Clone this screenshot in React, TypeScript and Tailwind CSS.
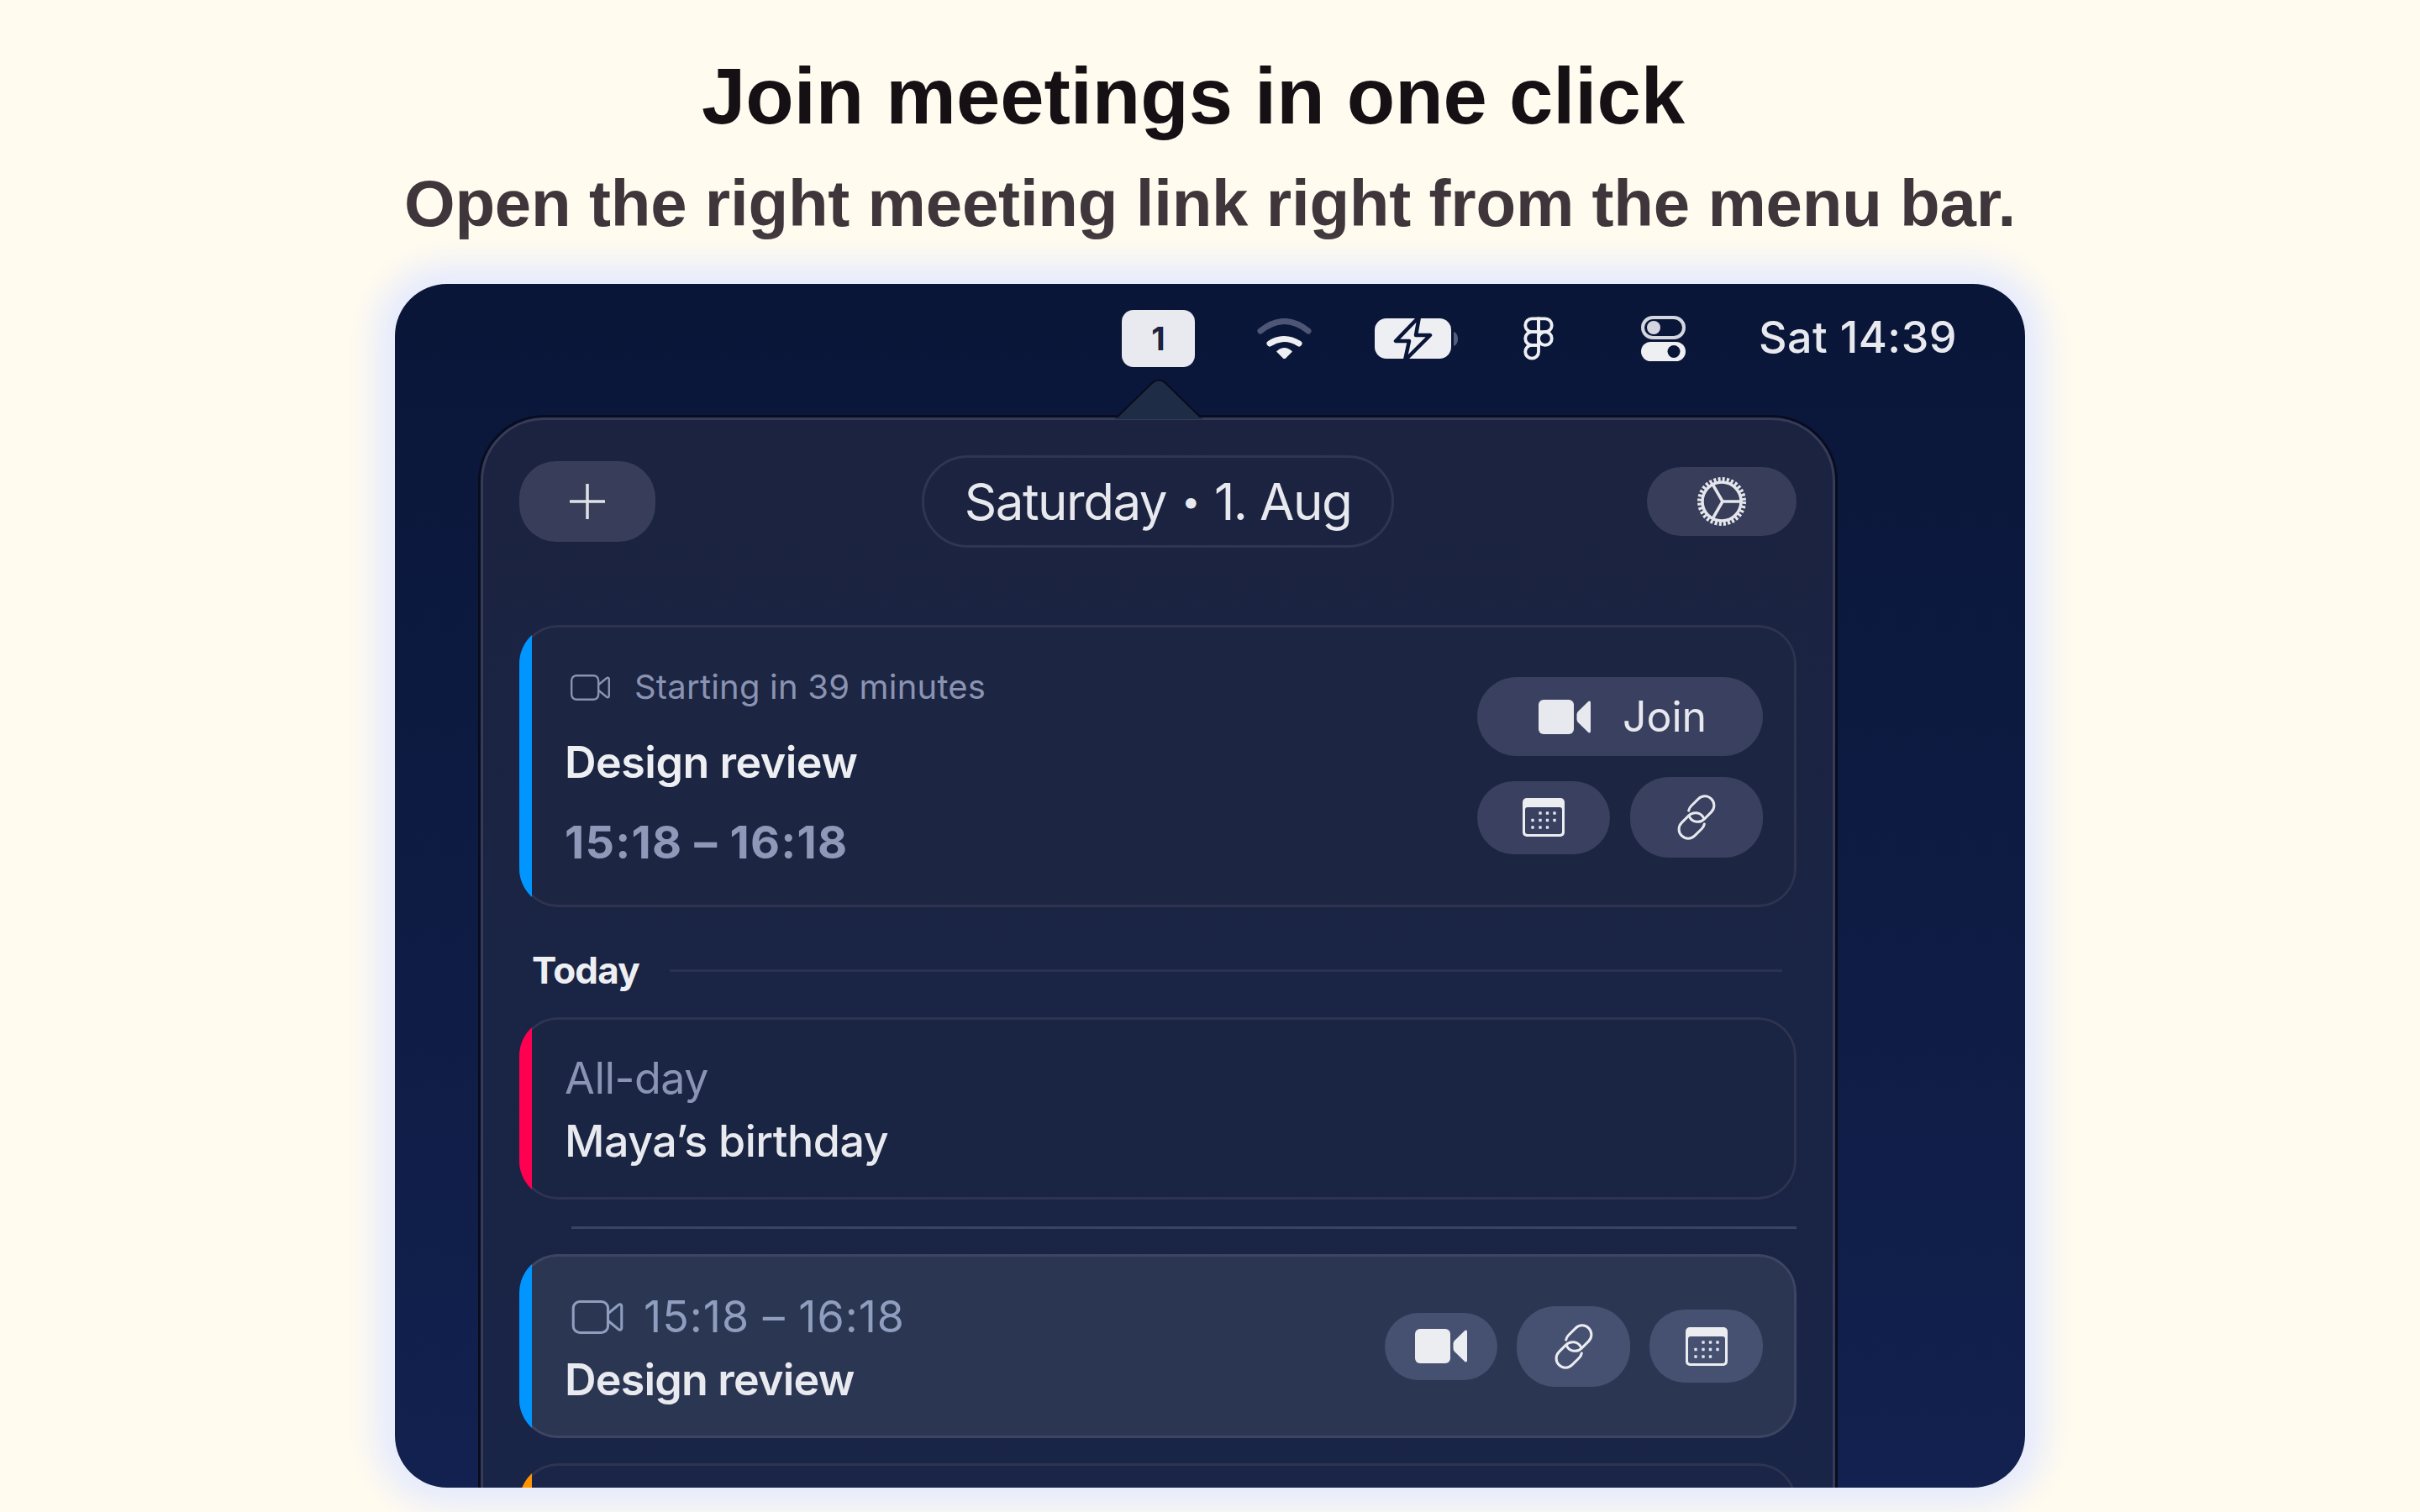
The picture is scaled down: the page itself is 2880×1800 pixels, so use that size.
import React from 'react';

const CameraOutline = ({ className }: { className: string }) => (
  <svg viewBox="0 0 47 31" fill="none" stroke="currentColor" strokeWidth="2.4" className={className}>
    <rect x="1.2" y="1.2" width="32" height="28.6" rx="6" />
    <path d="M33.5 12 43 4.2c1.3-1 2.8-.4 2.8 1.2v20.200c0 1.600-1.500 2.200-2.800 1.200L33.500 19" strokeLinejoin="round" />
  </svg>
);

const CameraFilled = ({ className }: { className: string }) => (
  <svg viewBox="0 0 62 41" fill="currentColor" className={className}>
    <rect width="42" height="41" rx="6" />
    <path d="M47.500 13.500 59 2.300C60.500 1 62 1.600 62 3.500v34c0 1.900-1.500 2.500-3 1.200L47.500 27.500c-1.500-1.500-2-2.700-2-4.500v-5c0-1.800.5-3 2-4.500z" />
  </svg>
);

const CalendarIcon = ({ inner, className }: { inner: string; className: string }) => {
  const dots = [
    [21, 18], [29.500, 18], [38, 18],
    [12, 26.500], [21, 26.500], [29.500, 26.500], [38, 26.500],
    [12, 35], [21, 35], [29.500, 35],
  ];
  return (
    <svg viewBox="0 0 50 46" className={className}>
      <rect width="50" height="46" rx="5" fill="#eceDF1" />
      <rect x="3" y="11" width="44" height="32" rx="3" fill={inner} />
      {dots.map(([x, y]) => (
        <rect key={`${x}-${y}`} x={x - 1.700} y={y - 1.700} width="3.400" height="3.400" rx="0.600" fill="#e3e5ec" />
      ))}
    </svg>
  );
};

const LinkIcon = ({ className }: { className: string }) => (
  <svg viewBox="1 -0.5 54 54" fill="none" stroke="currentColor" strokeWidth="3" strokeLinecap="round" className={className}>
    <g transform="rotate(-45 28 26.500)">
      <path d="M29 38.700A11 11 0 0 1 23 40.500H11A11 11 0 0 1 11 18.500H23A11 11 0 0 1 33.500 32.800" />
      <path d="M27 14.300A11 11 0 0 1 33 12.500H45A11 11 0 0 1 45 34.500H33A11 11 0 0 1 22.500 20.200" />
    </g>
  </svg>
);

const GearIcon = ({ className }: { className: string }) => (
  <svg viewBox="0 0 60 60" fill="none" stroke="currentColor" className={className}>
    <circle cx="30" cy="30" r="23" strokeWidth="3.500" />
    <circle cx="30" cy="30" r="26.500" strokeWidth="5" strokeDasharray="3 2.200" />
    <path d="M31 30H53M31 30 20 11M31 30 20 49" strokeWidth="3.500" strokeLinecap="round" />
  </svg>
);

const WifiIcon = () => (
  <svg viewBox="0 0 65 48" fill="none" strokeLinecap="round" className="w-[65px] h-[48px]">
    <path d="M4 15Q32.500-8 61 15" stroke="#4f5675" strokeWidth="7" />
    <path d="M15 30Q32.500 19 50 30" stroke="#eeeff3" strokeWidth="7" />
    <path d="M32.500 48 24 39.500Q32.500 32 41 39.500Z" fill="#eeeff3" stroke="#eeeff3" strokeWidth="1.500" strokeLinejoin="round" />
  </svg>
);

const BatteryIcon = () => (
  <svg viewBox="0 0 100 56" className="w-[100px] h-[56px]">
    <rect x="0" y="4" width="91" height="48" rx="14" fill="#eeeff3" />
    <path d="M94 20c3 1 5 4 5 8.500s-2 7.500-5 8.500z" fill="#555c7c" />
    <path d="M53 2 25 31H41L36 54 66 24H49Z" fill="#eeeff3" stroke="#0a1638" strokeWidth="4.500" strokeLinejoin="round" />
  </svg>
);

const FigmaIcon = () => (
  <svg viewBox="4 1 16 23" fill="none" stroke="#eeeff3" strokeWidth="1.700" className="w-[36px] h-[52px]">
    <path d="M5 5.500A3.500 3.500 0 0 1 8.500 2H12v7H8.500A3.500 3.500 0 0 1 5 5.500z" />
    <path d="M12 2h3.500a3.500 3.500 0 1 1 0 7H12V2z" />
    <path d="M12 12.500a3.500 3.500 0 1 1 7 0 3.500 3.500 0 1 1-7 0z" />
    <path d="M5 19.500A3.500 3.500 0 0 1 8.500 16H12v3.500a3.500 3.500 0 1 1-7 0z" />
    <path d="M5 12.500A3.500 3.500 0 0 1 8.500 9H12v7H8.500A3.500 3.500 0 0 1 5 12.500z" />
  </svg>
);

const ControlsIcon = () => (
  <svg viewBox="0 0 53 54" className="w-[53px] h-[54px]">
    <rect x="2" y="2" width="49" height="24" rx="12" fill="none" stroke="#d5d7e0" strokeWidth="4" />
    <circle cx="15" cy="14" r="8" fill="#d5d7e0" />
    <rect x="0" y="31" width="53" height="23" rx="11.500" fill="#eeeff3" />
    <circle cx="39" cy="42.500" r="7.500" fill="#0a1638" />
  </svg>
);

const Card = ({ accent, bg, border, children }: { accent: string; bg: string; border: string; children: React.ReactNode }) => (
  <div className={`relative flex overflow-hidden rounded-[46px] ${bg}`}>
    <div className={`absolute inset-0 rounded-[46px] border-[3px] ${border}`} />
    <div className={`relative w-[15px] shrink-0 ${accent}`} />
    <div className="relative flex-1 flex items-start justify-between pl-[39px] pr-[40px]">{children}</div>
  </div>
);

export default function App() {
  return (
    <div className="h-[1800px] overflow-hidden bg-[#fffbef] flex flex-col items-center font-[Inter,sans-serif]">
      <h1 className="mt-[60px] pr-[40px] font-['Liberation_Sans',sans-serif] font-bold text-[94px] leading-[110px] text-[#151014]">
        Join meetings in one click
      </h1>
      <h2 className="mt-[27px] font-['Liberation_Sans',sans-serif] font-bold text-[78px] leading-[90px] tracking-[-0.200px] text-[#3f363b]">
        Open the right meeting link right from the menu bar.
      </h2>

      <div className="mt-[51px] w-[1940px] h-[1433px] shrink-0 overflow-hidden rounded-[62px] bg-linear-to-b from-[#0a1638] to-[#12214f] shadow-[0_0_36px_24px_#e6ebfd]">
        <div className="h-[128px] flex items-center justify-end pr-[81px] text-[#e8e9ee]">
          <div className="mt-[2px] w-[87px] h-[68px] rounded-[14px] bg-[#e9eaef] flex items-center justify-center text-[38px] font-bold text-[#1b2340]">1</div>
          <div className="mt-[2px] ml-[74px]"><WifiIcon /></div>
          <div className="mt-[2px] ml-[75px]"><BatteryIcon /></div>
          <div className="mt-[2px] ml-[77px]"><FigmaIcon /></div>
          <div className="mt-[2px] ml-[104px]"><ControlsIcon /></div>
          <div className="ml-[87px] text-[52px] leading-[60px] font-medium tracking-[0.500px]">Sat 14:39</div>
        </div>

        <div className="relative mt-[31px] ml-[102px] w-[1612px] h-[1400px] rounded-[76px] border-[3px] border-[#353b58] bg-linear-to-b from-[#1b2340] to-[#192548] shadow-[0_0_0_3px_#080c1c]">
          <svg viewBox="0 0 104 48" className="absolute left-[752px] top-[-49px] w-[104px] h-[48px]">
            <path d="M1 47 44 5Q52-2 60 5L103 47Z" fill="#1f2c46" stroke="#080c1c" strokeWidth="2" />
            <path d="M0 48H104V46H0Z" fill="#1f2c46" />
          </svg>

          <div className="pl-[43px] pr-[43px]">
            <div className="pt-[42px] grid grid-cols-[1fr_auto_1fr] items-center">
              <button className="justify-self-start w-[162px] h-[96px] rounded-[44px] bg-[#383e5a] flex items-center justify-center">
                <svg viewBox="0 0 42 42" stroke="#dfe1e8" strokeWidth="3.500" className="w-[42px] h-[42px]">
                  <path d="M21 0V42M0 21H42" />
                </svg>
              </button>
              <div className="h-[110px] w-[562px] rounded-full border-[3px] border-[#2f3552] flex items-center justify-center text-[60px] text-[#e8e9ee] tracking-[-1.500px]">
                Saturday<span className="mx-[18px] text-[40px]">•</span>1. Aug
              </div>
              <button className="justify-self-end w-[178px] h-[82px] rounded-[41px] bg-[#383e5a] flex items-center justify-center text-[#e4e6ec]">
                <GearIcon className="w-[60px] h-[60px]" />
              </button>
            </div>

            <div className="mt-[92px]">
              <Card accent="bg-[#0095ff]" bg="bg-[#1c2541]" border="border-[#2e3450]">
                <div className="pt-[52px]">
                  <div className="h-[44px] flex items-center text-[#8a93b3]">
                    <CameraOutline className="ml-[7px] w-[47px] h-[31px]" />
                    <span className="ml-[29px] text-[40px] leading-[44px] tracking-[0.200px]">Starting in 39 minutes</span>
                  </div>
                  <div className="mt-[38px] text-[52px] leading-[60px] font-semibold text-[#eeeff3] tracking-[-0.500px]">Design review</div>
                  <div className="mt-[35px] text-[54px] leading-[60px] font-bold text-[#8f98b8] tracking-[1.200px]">15:18 – 16:18</div>
                </div>
                <div className="pt-[62px] pb-[59px] w-[340px]">
                  <button className="w-full h-[94px] pl-[6px] rounded-[47px] bg-[#394060] flex items-center justify-center text-[#e8e9ee]">
                    <CameraFilled className="w-[62px] h-[41px]" />
                    <span className="ml-[38px] text-[50px] leading-[60px]">Join</span>
                  </button>
                  <div className="mt-[25px] flex items-center justify-between">
                    <button className="w-[158px] h-[87px] rounded-[44px] bg-[#394060] flex items-center justify-center">
                      <CalendarIcon inner="#394060" className="w-[50px] h-[46px]" />
                    </button>
                    <button className="w-[158px] h-[96px] rounded-[46px] bg-[#394060] flex items-center justify-center text-[#e8e9ee]">
                      <LinkIcon className="w-[54px] h-[54px]" />
                    </button>
                  </div>
                </div>
              </Card>
            </div>

            <div className="mt-[49px] mb-[30px] h-[52px] pl-[15px] pr-[17px] flex items-center gap-[36px]">
              <span className="text-[44px] leading-[52px] font-bold text-[#eeeff3] tracking-[-0.800px]">Today</span>
              <div className="flex-1 h-[3px] bg-[#2b3250]" />
            </div>

            <Card accent="bg-[#ff0050]" bg="bg-[#1a2543]" border="border-[#2e3450]">
              <div className="h-[217px] pt-[43px]">
                <div className="text-[52px] leading-[60px] text-[#8a93b3] tracking-[-0.500px]">All-day</div>
                <div className="mt-[15px] text-[52px] leading-[60px] font-medium text-[#e9eaef] tracking-[-0.500px]">Maya’s birthday</div>
              </div>
            </Card>

            <div className="mt-[32px] ml-[62px] h-[3px] bg-[#3a4263]" />

            <div className="mt-[30px]">
              <Card accent="bg-[#0095ff]" bg="bg-[#2b3653]" border="border-[#3d4563]">
                <div className="h-[219px] pt-[45px]">
                  <div className="h-[60px] flex items-center text-[#8f9dbf]">
                    <CameraOutline className="ml-[8px] w-[62px] h-[40px]" />
                    <span className="ml-[24px] text-[52px] leading-[60px] tracking-[1px]">15:18 – 16:18</span>
                  </div>
                  <div className="mt-[15px] text-[52px] leading-[60px] font-semibold text-[#e9eaef] tracking-[-0.800px]">Design review</div>
                </div>
                <div className="self-center flex items-center gap-[23px]">
                  <button className="w-[134px] h-[80px] rounded-[40px] bg-[#465071] flex items-center justify-center text-[#eceDF1]">
                    <CameraFilled className="w-[62px] h-[41px]" />
                  </button>
                  <button className="w-[135px] h-[96px] rounded-[46px] bg-[#465071] flex items-center justify-center text-[#eceDF1]">
                    <LinkIcon className="w-[54px] h-[54px]" />
                  </button>
                  <button className="w-[135px] h-[87px] rounded-[42px] bg-[#465071] flex items-center justify-center">
                    <CalendarIcon inner="#465071" className="w-[50px] h-[46px]" />
                  </button>
                </div>
              </Card>
            </div>

            <div className="mt-[30px]">
              <Card accent="bg-[#ff9500]" bg="bg-[#1b2547]" border="border-[#2e3450]">
                <div className="h-[217px]" />
              </Card>
            </div>
          </div>
        </div>
      </div>
    </div>
  );
}
